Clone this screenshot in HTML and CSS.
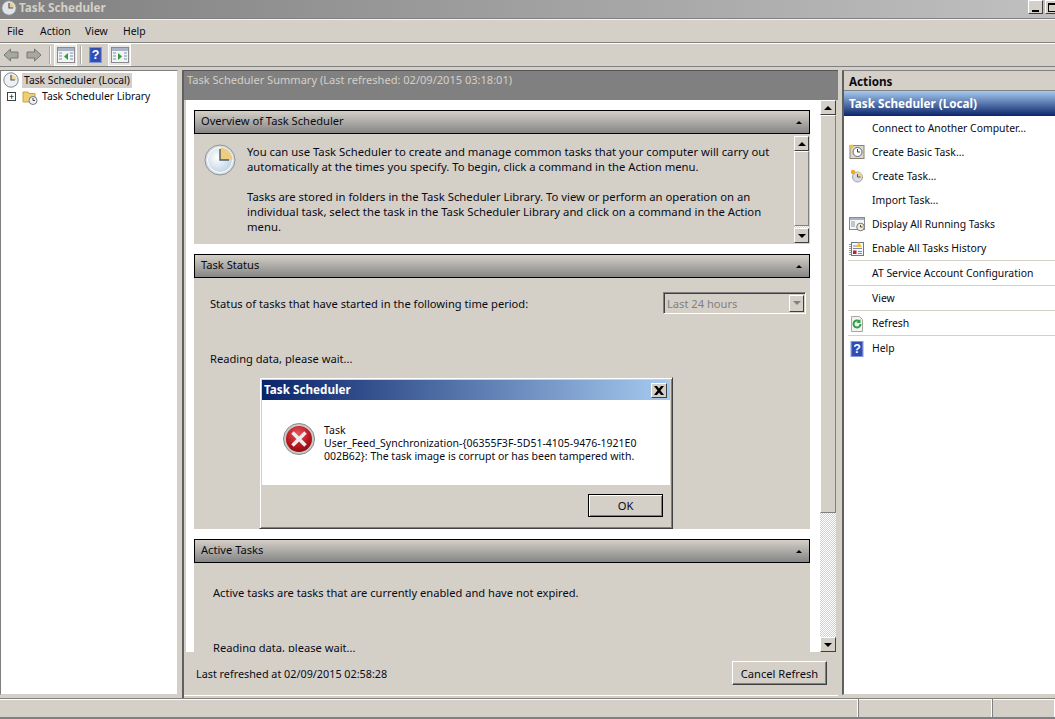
FILE: index.html
```html
<!DOCTYPE html>
<html lang="en">
<head>
<meta charset="utf-8">
<title>Task Scheduler</title>
<link rel="stylesheet" href="styles.css">
</head>
<body>
<div class="app">
  <header class="titlebar">
    <svg class="ic16" viewBox="0 0 16 16"><circle cx="8" cy="8" r="7.200" fill="#dfe3e8" stroke="#8a8f98"/><path d="M8 8V2.500A5.500 5.500 0 0 1 13.500 8Z" fill="#e8cf8a"/><path d="M8 3v5h4" fill="none" stroke="#555" stroke-width="1.200"/></svg>
    <span class="title-text">Task Scheduler</span>
    <span class="spacer"></span>
    <span class="winbtn"><i class="min"></i></span>
    <span class="winbtn winmax"><i class="max"></i></span>
  </header>
  <nav class="menubar"><span>File</span><span>Action</span><span>View</span><span>Help</span></nav>
  <div class="toolbar">
    <svg class="arrow" viewBox="0 0 16 14"><path d="M1 7 7.500 1v3H15v6H7.500v3Z" fill="#a8a8a2" stroke="#77776f"/></svg>
    <svg class="arrow" viewBox="0 0 16 14"><path d="M15 7 8.500 1v3H1v6h7.500v3Z" fill="#a8a8a2" stroke="#77776f"/></svg>
    <i class="tsep"></i>
    <span class="tbtn"><svg class="ic18" viewBox="0 0 18 16"><rect x=".5" y=".5" width="17" height="15" fill="#f4f4f4" stroke="#8a8a8a"/><rect x="1" y="1" width="16" height="3" fill="#aab4c4"/><path d="M2 6h3M2 9h3M2 12h3M13 6h3M13 9h3M13 12h3" stroke="#6f8fb5"/><path d="M11 6v7L7 9.500Z" fill="#2f9e3a"/></svg></span>
    <i class="tsep"></i>
    <svg class="help tb-help" viewBox="0 0 14 18"><rect width="14" height="18" fill="#2f4db5"/><rect x=".5" y=".5" width="13" height="17" fill="none" stroke="#8ea0dc"/><text x="7" y="14" text-anchor="middle" class="q">?</text></svg>
    <span class="tbtn tbtn2"><svg class="ic18" viewBox="0 0 18 16"><rect x=".5" y=".5" width="17" height="15" fill="#f4f4f4" stroke="#8a8a8a"/><rect x="1" y="1" width="16" height="3" fill="#aab4c4"/><path d="M2 6h3M2 9h3M2 12h3M13 6h3M13 9h3M13 12h3" stroke="#6f8fb5"/><path d="M7 6v7l4-3.500Z" fill="#2f9e3a"/></svg></span>
  </div>
  <main class="panes">
    <aside class="tree">
      <div class="tree-row">
        <svg class="ic16" viewBox="0 0 16 16"><circle cx="8" cy="8" r="7.200" fill="#eef0f3" stroke="#7f8a99"/><path d="M8 8V2.500A5.500 5.500 0 0 1 13.500 8Z" fill="#eed9a0"/><path d="M8 3v5h4" fill="none" stroke="#555" stroke-width="1.200"/></svg>
        <span class="selected">Task Scheduler (Local)</span>
      </div>
      <div class="tree-row child">
        <span class="expander">+</span>
        <svg class="ic16" viewBox="0 0 16 16"><path d="M1 3h5l1 1.500h6V13H1Z" fill="#f0cf72" stroke="#c3a24a"/><circle cx="11" cy="11.500" r="4" fill="#eef0f3" stroke="#6f7a88"/><path d="M11 9v2.500h2" fill="none" stroke="#444"/></svg>
        <span>Task Scheduler Library</span>
      </div>
    </aside>
    <section class="center">
      <div class="center-head">Task Scheduler Summary (Last refreshed: 02/09/2015 03:18:01)</div>
      <div class="center-scroll">
        <div class="content">
          <div class="sec">
            <div class="sec-head"><span>Overview of Task Scheduler</span><b class="caret"></b></div>
            <div class="sec-body overview">
              <svg class="clock" viewBox="0 0 32 32"><defs><radialGradient id="cg" cx=".4" cy=".4" r=".7"><stop offset="0" stop-color="#fff"/><stop offset="1" stop-color="#b9cfe2"/></radialGradient></defs><circle cx="16" cy="16" r="15" fill="#d9dde2" stroke="#8d939b"/><circle cx="16" cy="16" r="12.500" fill="url(#cg)" stroke="#fff"/><path d="M16 16V3.500A12.500 12.500 0 0 1 28.500 16Z" fill="#edcd80"/><path d="M16 5v11h9" fill="none" stroke="#4c5a6a" stroke-width="1.400"/></svg>
              <div class="ov-text">
                <p>You can use Task Scheduler to create and manage common tasks that your computer will carry out automatically at the times you specify. To begin, click a command in the Action menu.</p>
                <p>Tasks are stored in folders in the Task Scheduler Library. To view or perform an operation on an individual task, select the task in the Task Scheduler Library and click on a command in the Action menu.</p>
              </div>
              <div class="sb sb-inner">
                <span class="sb-btn"><b class="up"></b></span>
                <span class="sb-thumb inner-thumb"></span>
                <span class="sb-track"></span>
                <span class="sb-btn"><b class="down"></b></span>
              </div>
            </div>
          </div>
          <div class="sec">
            <div class="sec-head"><span>Task Status</span><b class="caret"></b></div>
            <div class="sec-body status">
              <div class="status-row">
                <span>Status of tasks that have started in the following time period:</span>
                <span class="select"><span>Last 24 hours</span><span class="select-btn"><b class="down dis"></b></span></span>
              </div>
              <p class="reading">Reading data, please wait...</p>
            </div>
          </div>
          <div class="sec">
            <div class="sec-head"><span>Active Tasks</span><b class="caret"></b></div>
            <div class="sec-body active">
              <p class="act-line">Active tasks are tasks that are currently enabled and have not expired.</p>
              <p class="act-read">Reading data, please wait...</p>
            </div>
          </div>
        </div>
        <div class="sb sb-outer">
          <span class="sb-btn"><b class="up"></b></span>
          <span class="sb-thumb outer-thumb"></span>
          <span class="sb-track"></span>
          <span class="sb-btn"><b class="down"></b></span>
        </div>
      </div>
      <div class="center-foot">
        <span class="foot-text">Last refreshed at 02/09/2015 02:58:28</span>
        <span class="btn">Cancel Refresh</span>
      </div>
    </section>
    <aside class="actions">
      <div class="act-title">Actions</div>
      <div class="act-band">Task Scheduler (Local)</div>
      <ul class="act-list">
        <li><i class="ai"></i>Connect to Another Computer...</li>
        <li><svg class="ai" viewBox="0 0 16 16"><rect x="1" y="1.500" width="14" height="13" fill="#dcd8d0" stroke="#8a8378"/><circle cx="8.500" cy="8" r="4.500" fill="#fff" stroke="#5f6670"/><path d="M8.500 5v3h2.500" fill="none" stroke="#333"/><circle cx="2.500" cy="2.500" r="2" fill="#f2c230"/></svg>Create Basic Task...</li>
        <li><svg class="ai" viewBox="0 0 16 16"><circle cx="8.500" cy="9" r="5" fill="#d8dde3" stroke="#9aa2ac"/><path d="M8.500 9V4A5 5 0 0 1 13.500 9Z" fill="#efd38c"/><path d="M8.500 6v3h3" fill="none" stroke="#555"/><circle cx="4" cy="4" r="2.200" fill="#f0a820"/></svg>Create Task...</li>
        <li><i class="ai"></i>Import Task...</li>
        <li><svg class="ai" viewBox="0 0 16 16"><rect x=".5" y="1.500" width="15" height="12" fill="#f5f5f5" stroke="#8a8a8a"/><rect x="1" y="2" width="14" height="2" fill="#a9b4c4"/><path d="M2 6h4M2 8h4M2 10h4" stroke="#8a98ac"/><circle cx="11.500" cy="11" r="3.800" fill="#f3ead0" stroke="#6f7a88"/><path d="M11.500 9v2h2" fill="none" stroke="#444"/></svg>Display All Running Tasks</li>
        <li class="sep"><svg class="ai" viewBox="0 0 16 16"><rect x="2.500" y="1.500" width="12" height="13" fill="#f7f7ff" stroke="#6d7890"/><path d="M4 5h4M4 7.500h9M9 10.500h4M9 12.500h4" stroke="#7a8aa8"/><path d="M10 1l3 5H7Z" fill="#f2c230"/><rect x="4" y="9.500" width="3.500" height="3.500" fill="#c0222a"/><path d="M1 3v11" stroke="#333" stroke-dasharray="1 1"/></svg>Enable All Tasks History</li>
        <li class="wide sep"><i class="ai"></i>AT Service Account Configuration</li>
        <li class="wide sep"><i class="ai"></i>View</li>
        <li class="wide sep"><svg class="ai" viewBox="0 0 16 16"><path d="M2.500.500h8l3 3v12h-11Z" fill="#f2f2ee" stroke="#a8a89e"/><path d="M11.500 8a3.500 3.500 0 1 1-1.200-2.700" fill="none" stroke="#2ea04a" stroke-width="2"/><path d="M11.500 3v4h-4Z" fill="#2ea04a"/></svg>Refresh</li>
        <li class="wide"><svg class="ai" viewBox="0 0 14 18"><rect width="14" height="18" fill="#2f4db5"/><rect x=".5" y=".5" width="13" height="17" fill="none" stroke="#8ea0dc"/><text x="7" y="14" text-anchor="middle" class="q">?</text></svg>Help</li>
      </ul>
    </aside>
  </main>
  <footer class="statusbar"><span class="st st1"></span><span class="st st2"></span><span class="st st3"></span></footer>
</div>
<div class="dialog">
  <div class="dlg-title"><span>Task Scheduler</span><span class="dlg-close"><svg viewBox="0 0 10 9"><path d="M0 0h3l2 2.500L7 0h3L6.500 4.500 10 9H7L5 6.500 3 9H0L3.500 4.500Z" fill="#000"/></svg></span></div>
  <div class="dlg-body">
    <svg class="err" viewBox="0 0 32 32"><defs><radialGradient id="eg" cx=".45" cy=".3" r=".8"><stop offset="0" stop-color="#e8555c"/><stop offset=".6" stop-color="#b5141b"/><stop offset="1" stop-color="#7d0a10"/></radialGradient></defs><circle cx="16" cy="16" r="15.500" fill="#c9c9c9" stroke="#8c8c8c"/><circle cx="16" cy="16" r="13" fill="url(#eg)"/><path d="M9.500 9.500l13 13M22.500 9.500l-13 13" stroke="#eee" stroke-width="3.600"/></svg>
    <div class="dlg-msg">Task<br>User_Feed_Synchronization-{06355F3F-5D51-4105-9476-1921E0<br>002B62}: The task image is corrupt or has been tampered with.</div>
  </div>
  <div class="dlg-foot"><span class="ok">OK</span></div>
</div>
</body>
</html>
```

FILE: styles.css
```css
* { box-sizing: border-box; }
html, body { margin: 0; padding: 0; height: 100%; overflow: hidden; }
body { font: 11.130px/15px "Noto Sans", "Open Sans", sans-serif; color: #0a0a14; background: #d4d0c8; }
p { margin: 0; }
ul { margin: 0; padding: 0; list-style: none; }
i, b { display: block; }

.app { width: 1055px; height: 719px; display: flex; flex-direction: column; }

.titlebar { height: 20px; padding: 0 0 4px 1px; display: flex; align-items: flex-start; gap: 2px; background: linear-gradient(90deg, #808080, #c0c0c0); border-bottom: 1px solid #f4f3ef; box-shadow: inset 0 -1px 0 #808080; flex: none; overflow: hidden; }
.ic16 { width: 16px; height: 16px; flex: none; }
.title-text { font-weight: 700; font-size: 11.700px; color: #d4d0c8; line-height: 15px; }
.spacer { flex: 1; }
.winbtn { width: 15px; height: 14px; background: #d4d0c8; border: 1px solid; border-color: #fff #404040 #404040 #fff; display: flex; align-items: center; justify-content: center; flex: none; }
.winmax { margin-right: -5px; }
.min { width: 7px; height: 2px; background: #000; margin-top: 7px; }
.max { width: 9px; height: 9px; border: 1px solid #000; border-top-width: 2px; }

.menubar { height: 23px; display: flex; align-items: center; border-bottom: 1px solid #808080; flex: none; padding: 1px 0 0 7px; font-size: 10.400px; }
.menubar span:nth-child(1) { width: 33px; }
.menubar span:nth-child(2) { width: 45px; }
.menubar span:nth-child(3) { width: 38px; }

.toolbar { height: 24px; display: flex; align-items: center; border-top: 1px solid #fff; border-bottom: 1px solid #808080; padding-left: 3px; flex: none; }
.arrow { width: 16px; height: 14px; margin-right: 7px; }
.tsep { width: 2px; height: 18px; background: #a9a69e; border-right: 1px solid #fff; margin: 0 3px 0 0; }
.tbtn { width: 23px; height: 22px; display: flex; align-items: center; justify-content: center; background: #e8e6e0; border: 1px solid #fff; margin: 0 3px 0 0; }
.tbtn2 { margin: 0 0 0 6px; }
.ic18 { width: 18px; height: 16px; }
.help { width: 13px; height: 16px; }
.tb-help { margin-left: 4px; }
.q { font: 700 14px "Liberation Sans", sans-serif; fill: #fff; }

.panes { flex: 1; min-height: 0; display: grid; grid-template-columns: 178px 656px 1fr; column-gap: 4px; padding-top: 3px; }

.tree { background: #fff; border: 1px solid #808080; border-right-color: #d4d0c8; border-bottom-color: #d4d0c8; margin-bottom: 3px; padding-top: 1px; font-size: 10.300px; }
.tree-row { height: 16px; display: flex; align-items: center; gap: 3px; padding-left: 2px; margin-bottom: 8px; }
.tree-row.child { padding-left: 6px; margin-top: -8px; margin-bottom: 0; height: 17px; gap: 4px; }
.selected { background: #d4d0c8; padding: 0 2px; }
.expander { width: 9px; height: 9px; border: 1px solid #404040; font-size: 9px; line-height: 7px; text-align: center; color: #000; flex: none; margin-right: 2px; }

.center { display: flex; flex-direction: column; border-left: 2px solid #606060; min-height: 0; }
.center-head { height: 30px; flex: none; background: #808080; color: #d4d0c8; padding: 1px 0 0 3px; border-top: 1px solid #555; font-size: 11.060px; }
.center-scroll { flex: none; height: 552px; display: flex; margin-left: 2px; }
.content { width: 634px; padding: 10px 10px 0 8px; background: #fff; overflow: hidden; height: 552px; }
.sec { margin-bottom: 10px; }
.sec-head { height: 24px; display: flex; align-items: center; justify-content: space-between; padding: 0 7px 4px 6px; border: 1px solid #000; background: linear-gradient(#d4d0c8, #858585); }
.caret { width: 0; height: 0; border-left: 3px solid transparent; border-right: 3px solid transparent; border-bottom: 3px solid #000; margin-top: 4px; }
.sec-body { background: #d4d0c8; }

.overview { height: 110px; display: flex; padding-top: 10px; }
.clock { width: 32px; height: 32px; margin: 0 11px 0 10px; flex: none; }
.ov-text { width: 545px; font-size: 11.300px; }
.ov-text p { max-width: 530px; }
.ov-text p + p { margin-top: 15px; }
.sb { display: flex; flex-direction: column; flex: none; }
.sb-inner { width: 15px; margin: -8px 0 1px 2px; }
.sb-outer { width: 16px; height: 552px; }
.sb-btn { height: 15px; flex: none; background: #d4d0c8; border: 1px solid; border-color: #fff #404040 #404040 #fff; display: flex; align-items: center; justify-content: center; }
.sb-thumb { background: #d4d0c8; border: 1px solid; border-color: #fff #808080 #808080 #fff; flex: none; }
.inner-thumb { height: 75px; }
.outer-thumb { height: 398px; }
.sb-track { flex: 1; background: repeating-conic-gradient(#fff 0 25%, #d4d0c8 0 50%) 0 0 / 2px 2px; }
.up { width: 0; height: 0; border-left: 4px solid transparent; border-right: 4px solid transparent; border-bottom: 4px solid #000; }
.down { width: 0; height: 0; border-left: 4px solid transparent; border-right: 4px solid transparent; border-top: 4px solid #000; }
.down.dis { border-top-color: #808080; }

.status { height: 251px; padding: 14px 4px 0 16px; }
.status-row { display: flex; justify-content: space-between; align-items: center; height: 22px; }
.select { width: 143px; height: 22px; display: flex; align-items: center; justify-content: space-between; padding: 0 1px 0 3px; color: #808080; border: 1px solid; border-color: #808080 #fff #fff #808080; box-shadow: inset 1px 1px 0 #404040; }
.select-btn { width: 15px; height: 17px; display: flex; align-items: center; justify-content: center; border: 1px solid; border-color: #fff #404040 #404040 #fff; }
.reading { margin-top: 37px; }

.active { height: 100px; padding: 22px 0 0 19px; }
.act-read { margin-top: 40px; }

.center-foot { height: 44px; flex: none; display: flex; align-items: center; justify-content: space-between; padding: 0 11px 1px 12px; border-bottom: 1px solid #fff; margin-bottom: 2px; }
.foot-text { font-size: 10.800px; }
.btn { width: 95px; height: 24px; display: flex; align-items: center; justify-content: center; border: 1px solid; border-color: #fff #404040 #404040 #fff; box-shadow: inset -1px -1px 0 #808080; }

.actions { background: #fff; border: 1px solid #808080; border-left: 2px solid #606060; border-right: 0; border-bottom-color: #d4d0c8; margin-bottom: 3px; font-size: 10.400px; }
.act-title { height: 20px; background: #d4d0c8; font-weight: 700; font-size: 11.700px; padding: 3px 0 0 5px; border-bottom: 1px solid #808080; }
.act-band { height: 25px; padding: 5px 0 0 5px; color: #fff; font-weight: 700; font-size: 11.700px; background: linear-gradient(#a6caf0, #0a246a); }
.act-list li { display: flex; align-items: center; height: 24px; padding-left: 5px; }
.ai { width: 16px; height: 16px; flex: none; margin-right: 7px; }
.act-list li.sep { position: relative; height: 25px; }
.act-list li.sep::after { content: ""; position: absolute; left: 4px; right: 0; bottom: 0; height: 1px; background: #d4d0c8; }
.act-list li.wide { height: 25px; }

.statusbar { height: 21px; flex: none; display: flex; border-top: 1px solid #808080; border-bottom: 2px solid #808080; box-shadow: inset 0 1px 0 #fff; }
.st { height: 100%; border-right: 1px solid #fff; }
.st1 { width: 858px; }
.st2 { width: 134px; border-left: 1px solid #808080; }
.st3 { flex: 1; border-left: 1px solid #808080; }

.dialog { position: absolute; left: 259px; top: 377px; width: 414px; height: 152px; background: #d4d0c8; border: 1px solid; border-color: #d4d0c8 #404040 #404040 #d4d0c8; box-shadow: inset 1px 1px 0 #fff, inset -1px -1px 0 #808080; padding: 2px; display: flex; flex-direction: column; }
.dlg-title { height: 20px; flex: none; display: flex; align-items: center; justify-content: space-between; padding: 0 3px 2px 2px; color: #fff; font-weight: 700; font-size: 11.700px; background: linear-gradient(90deg, #0a246a, #a6caf0); }
.dlg-close { width: 16px; height: 15px; margin-top: 2px; background: #d4d0c8; border: 1px solid; border-color: #fff #404040 #404040 #fff; display: flex; align-items: center; justify-content: center; }
.dlg-close svg { width: 10px; height: 9px; }
.dlg-body { height: 85px; flex: none; background: #fff; display: flex; padding: 23px 0 0 21px; }
.err { width: 32px; height: 32px; flex: none; margin-right: 9px; }
.dlg-msg { line-height: 13px; padding-top: 1px; white-space: nowrap; font-size: 10.500px; }
.dlg-foot { flex: 1; display: flex; justify-content: flex-end; align-items: flex-start; padding: 9px 7px 0 0; }
.ok { width: 75px; height: 23px; display: flex; align-items: center; justify-content: center; border: 1px solid #000; box-shadow: inset 1px 1px 0 #fff, inset -1px -1px 0 #808080; }
```
